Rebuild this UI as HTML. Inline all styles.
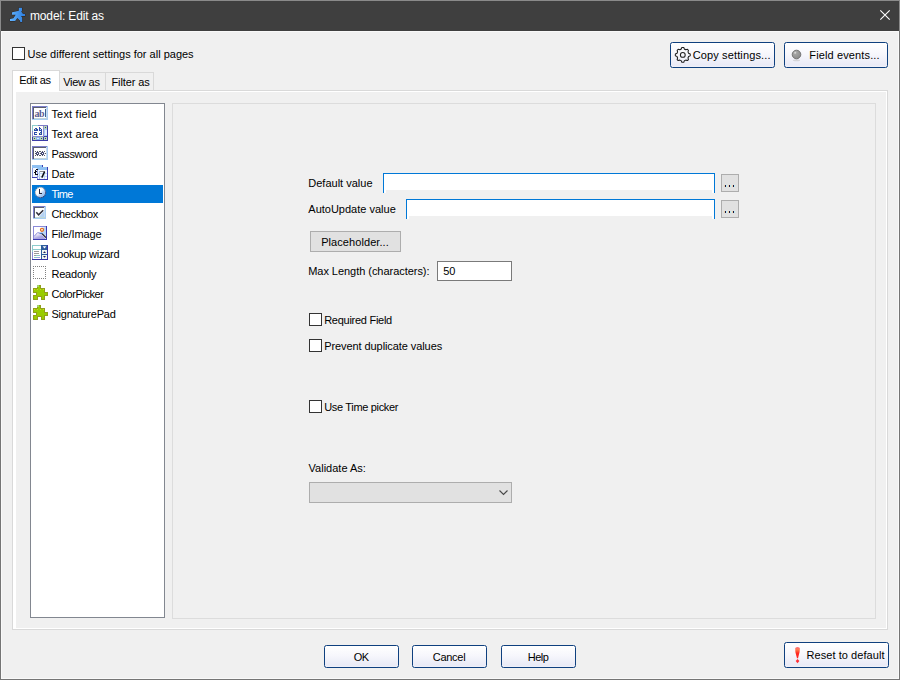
<!DOCTYPE html>
<html>
<head>
<meta charset="utf-8">
<title>model: Edit as</title>
<style>
html,body{margin:0;padding:0;}
body{width:900px;height:680px;overflow:hidden;background:#f0f0f0;font-family:"Liberation Sans",sans-serif;font-size:11px;color:#000;position:relative;}
.a{position:absolute;box-sizing:border-box;}
.t{position:absolute;white-space:nowrap;line-height:13px;font-size:11px;}
.frame{left:0;top:0;width:900px;height:680px;border:1px solid #757575;}
.frame2{left:1px;top:31px;width:898px;height:648px;border:1px solid #f9f9f9;}
.frameT{left:0;top:0;width:900px;height:31px;border:1px solid #8a8a8a;border-bottom:none;}
.title{left:1px;top:1px;width:898px;height:30px;background:#3f3f3f;}
.title .t{color:#fff;font-size:12px;line-height:15px;}
.cb{width:13px;height:13px;border:1px solid #333;background:#fff;}
.bb{border:1px solid #0f407f;border-radius:2.5px;background:linear-gradient(#ffffff,#f7f7fc 45%,#e9eaf6 92%,#f0f1f9);}
.gb{border:1px solid #adadad;background:#e1e1e1;}
.sel{background:#0078d7;}
svg{position:absolute;left:0;top:0;overflow:visible;}
</style>
</head>
<body>
<!-- window frame -->
<div class="a frame"></div>
<div class="a frame2"></div>
<div class="a frameT"></div>
<div class="a title">
<span class="t" style="left:29px;top:8px;letter-spacing:-0.15px;">model: Edit as</span>
</div>

<!-- top row -->
<div class="a cb" style="left:12px;top:47px;"></div>
<span class="t" style="left:27.5px;top:48px;">Use different settings for all pages</span>

<div class="a bb" style="left:670px;top:42px;width:105px;height:26px;"></div>
<span class="t" style="left:692.7px;top:49px;letter-spacing:0.13px;">Copy settings...</span>
<div class="a bb" style="left:784px;top:42px;width:104px;height:26px;"></div>
<span class="t" style="left:809.3px;top:49px;letter-spacing:0.13px;">Field events...</span>

<!-- tab control -->
<div class="a" style="left:12px;top:90px;width:876px;height:540px;border:1px solid #d9d9d9;background:#fff;"></div>
<div class="a" style="left:16px;top:92px;width:870px;height:536px;background:#f0f0f0;"></div>
<div class="a" style="left:59px;top:72px;width:47px;height:18px;border:1px solid #d9d9d9;border-bottom:none;border-left:none;background:#f0f0f0;"></div>
<div class="a" style="left:105px;top:72px;width:49px;height:18px;border:1px solid #d9d9d9;border-bottom:none;background:#f0f0f0;"></div>
<div class="a" style="left:12px;top:70px;width:48px;height:21px;border:1px solid #d9d9d9;border-bottom:none;background:#fff;"></div>
<span class="t" style="left:19.2px;top:74px;letter-spacing:-0.3px;">Edit as</span>
<span class="t" style="left:63.2px;top:76px;letter-spacing:-0.27px;">View as</span>
<span class="t" style="left:111.5px;top:76px;letter-spacing:-0.1px;">Filter as</span>

<!-- listbox -->
<div class="a" style="left:30px;top:103px;width:135px;height:515px;border:1px solid #828790;background:#fff;"></div>
<div class="a sel" style="left:32px;top:185px;width:131px;height:18px;"></div>
<span class="t" style="left:51.4px;top:108px;letter-spacing:0.2px;">Text field</span>
<span class="t" style="left:51.4px;top:128px;letter-spacing:0.18px;">Text area</span>
<span class="t" style="left:51.4px;top:148px;letter-spacing:-0.32px;">Password</span>
<span class="t" style="left:51.4px;top:168px;">Date</span>
<span class="t" style="left:51.4px;top:188px;letter-spacing:-0.65px;color:#fff;">Time</span>
<span class="t" style="left:51.4px;top:208px;letter-spacing:-0.29px;">Checkbox</span>
<span class="t" style="left:51.4px;top:228px;letter-spacing:-0.13px;">File/Image</span>
<span class="t" style="left:51.4px;top:248px;letter-spacing:-0.22px;">Lookup wizard</span>
<span class="t" style="left:51.4px;top:268px;letter-spacing:-0.18px;">Readonly</span>
<span class="t" style="left:51.4px;top:288px;letter-spacing:-0.43px;">ColorPicker</span>
<span class="t" style="left:51.4px;top:308px;letter-spacing:-0.2px;">SignaturePad</span>
<svg width="900" height="680" viewBox="0 0 900 680" shape-rendering="crispEdges">
<rect x="32" y="106" width="16" height="14" fill="#a9cdf2"/><rect x="32" y="106" width="15" height="13" fill="#7d7fcc"/><rect x="33" y="107" width="14" height="12" fill="#5a5f6e"/><rect x="34" y="108" width="13" height="11" fill="#fff"/><rect x="46" y="107" width="1" height="12" fill="#c8dcf0"/><rect x="34" y="118" width="13" height="1" fill="#c0d4d8"/><g fill="#5a5c8a"><rect x="45" y="109" width="1" height="8" fill="#3f5f8f"/></g>
<text x="34.5" y="117" font-family="Liberation Serif" font-size="10" font-weight="bold" fill="#5b5c90" shape-rendering="auto" style="letter-spacing:-0.5px">ab</text>
<rect x="32" y="125" width="16" height="16" fill="#3c3ca8"/><rect x="32" y="125" width="12" height="12" fill="#8e8fd0"/><rect x="32" y="125" width="6" height="6" fill="#8fcfcf"/><rect x="33" y="126" width="10" height="10" fill="#fffffa"/><rect x="44" y="126" width="3" height="3" fill="#b8d8b0"/><rect x="45" y="127" width="1" height="1" fill="#2a3c9a"/><rect x="44" y="129" width="3" height="7" fill="#a8ccf4"/><rect x="45" y="130" width="2" height="5" fill="#e4eefc"/><rect x="33" y="137" width="3" height="3" fill="#b8d8b0"/><rect x="34" y="138" width="1" height="1" fill="#2a3c9a"/><rect x="36" y="137" width="4" height="3" fill="#8ab4ec"/><rect x="37" y="138" width="2" height="1" fill="#e4eefc"/><rect x="40" y="137" width="3" height="3" fill="#b8d8b0"/><rect x="41" y="138" width="1" height="1" fill="#2a3c9a"/><rect x="44" y="137" width="3" height="3" fill="#b8d8b0"/><rect x="45" y="138" width="1" height="1" fill="#2a3c9a"/>
<g fill="#2c4cac"><rect x="35" y="128" width="1" height="1"/><rect x="36" y="128" width="1" height="1"/><rect x="34" y="129" width="1" height="1"/><rect x="36" y="129" width="1" height="1"/><rect x="37" y="129" width="1" height="1"/><rect x="34" y="130" width="1" height="1"/><rect x="35" y="130" width="1" height="1"/><rect x="36" y="130" width="1" height="1"/><rect x="37" y="130" width="1" height="1"/><rect x="39" y="127" width="1" height="1"/><rect x="39" y="128" width="1" height="1"/><rect x="40" y="128" width="1" height="1"/><rect x="39" y="129" width="1" height="1"/><rect x="41" y="129" width="1" height="1"/><rect x="39" y="130" width="1" height="1"/><rect x="40" y="130" width="1" height="1"/><rect x="41" y="130" width="1" height="1"/><rect x="34" y="132" width="1" height="1"/><rect x="35" y="132" width="1" height="1"/><rect x="36" y="132" width="1" height="1"/><rect x="34" y="133" width="1" height="1"/><rect x="34" y="134" width="1" height="1"/><rect x="35" y="134" width="1" height="1"/><rect x="36" y="134" width="1" height="1"/><rect x="41" y="131" width="1" height="1"/><rect x="40" y="132" width="1" height="1"/><rect x="41" y="132" width="1" height="1"/><rect x="39" y="133" width="1" height="1"/><rect x="41" y="133" width="1" height="1"/><rect x="39" y="134" width="1" height="1"/><rect x="40" y="134" width="1" height="1"/><rect x="41" y="134" width="1" height="1"/></g><rect x="35" y="129" width="1" height="1" fill="#c8d890"/><rect x="40" y="129" width="1" height="1" fill="#d8e8f8"/><rect x="40" y="133" width="1" height="1" fill="#b8d8a0"/><rect x="38" y="125" width="10" height="1" fill="#7c7cc8"/>
<rect x="32" y="146" width="16" height="14" fill="#a9cdf2"/><rect x="32" y="146" width="15" height="13" fill="#7d7fcc"/><rect x="33" y="147" width="14" height="12" fill="#5a5f6e"/><rect x="34" y="148" width="13" height="11" fill="#fff"/><rect x="46" y="147" width="1" height="12" fill="#c8dcf0"/><rect x="34" y="158" width="13" height="1" fill="#c0d4d8"/><g fill="#3a3d6a" shape-rendering="auto"><circle cx="37.5" cy="153.5" r="1.7"/><circle cx="42.5" cy="153.5" r="1.7"/></g><g fill="#fff"><rect x="37" y="153" width="1" height="1"/><rect x="42" y="153" width="1" height="1"/></g><rect x="35" y="151" width="1" height="1" fill="#555a66"/><rect x="37" y="151" width="1" height="1" fill="#555a66"/><rect x="39" y="151" width="1" height="1" fill="#555a66"/><rect x="40" y="151" width="1" height="1" fill="#555a66"/><rect x="42" y="151" width="1" height="1" fill="#555a66"/><rect x="44" y="151" width="1" height="1" fill="#555a66"/><rect x="35" y="155" width="1" height="1" fill="#555a66"/><rect x="37" y="155" width="1" height="1" fill="#555a66"/><rect x="39" y="155" width="1" height="1" fill="#555a66"/><rect x="40" y="155" width="1" height="1" fill="#555a66"/><rect x="42" y="155" width="1" height="1" fill="#555a66"/><rect x="44" y="155" width="1" height="1" fill="#555a66"/><rect x="35" y="153" width="1" height="1" fill="#555a66"/><rect x="40" y="153" width="1" height="1" fill="#555a66"/><rect x="45" y="153" width="1" height="1" fill="#555a66"/>
<rect x="32" y="165" width="11" height="13" fill="#3c3cb0"/><rect x="32" y="165" width="10" height="12" fill="#8c9ce0"/><rect x="32" y="165" width="10" height="3" fill="#8ec0f2"/><rect x="33" y="168" width="9" height="9" fill="#f4f8ff"/><rect x="37" y="167" width="11" height="13" fill="#3c3cb0"/><rect x="37" y="167" width="10" height="12" fill="#8c9ce0"/><rect x="37" y="167" width="10" height="3" fill="#8ec0f2"/><rect x="38" y="170" width="9" height="9" fill="#f4f8ff"/><rect x="39" y="171" width="1" height="8" fill="#a8c4ec"/><rect x="38" y="173" width="9" height="1" fill="#c4d8f4"/><rect x="38" y="176" width="9" height="1" fill="#c4d8f4"/><rect x="44" y="171" width="1" height="8" fill="#c4d8f4"/><g fill="#0c0c14"><rect x="36" y="169" width="1" height="1"/><rect x="37" y="169" width="1" height="1"/><rect x="35" y="170" width="1" height="1"/><rect x="35" y="171" width="1" height="1"/><rect x="36" y="171" width="1" height="1"/><rect x="34" y="172" width="1" height="1"/><rect x="35" y="172" width="1" height="1"/><rect x="35" y="173" width="1" height="1"/><rect x="35" y="174" width="1" height="1"/><rect x="36" y="174" width="1" height="1"/><rect x="37" y="174" width="1" height="1"/></g><rect x="40" y="171" width="5" height="1" fill="#8c8c90"/><path d="M44.6,171.6 L41.8,177.6" stroke="#0c0c14" stroke-width="1.5" fill="none" shape-rendering="auto"/>
<g shape-rendering="auto"><defs><linearGradient id="ck" x1="0" y1="0" x2="1" y2="1"><stop offset="0.42" stop-color="#ffffff"/><stop offset="0.68" stop-color="#a4c8f2"/></linearGradient><linearGradient id="ckb" x1="0" y1="0" x2="1" y2="1"><stop offset="0.2" stop-color="#d8d0c4"/><stop offset="0.6" stop-color="#7c78a0"/><stop offset="1" stop-color="#1c1c50"/></linearGradient></defs><circle cx="40.5" cy="192.5" r="5.1" fill="url(#ck)" stroke="url(#ckb)" stroke-width="1.1" stroke-dasharray="1.3 0.7"/></g><rect x="39" y="189" width="1" height="5" fill="#26263c"/><rect x="39" y="193" width="3" height="1" fill="#26263c"/>
<rect x="33" y="206" width="13" height="13" fill="#a9cdf2"/><rect x="33" y="206" width="12" height="12" fill="#7d7fcc"/><rect x="34" y="207" width="11" height="11" fill="#5a5f6e"/><rect x="35" y="208" width="10" height="10" fill="#fff"/><path d="M45,210 V218 H38 Z" fill="#b4d2f4" shape-rendering="auto"/><rect x="44" y="207" width="1" height="11" fill="#c8dcf0"/><rect x="35" y="217" width="10" height="1" fill="#c0d8d4"/><path d="M36.3,212.3 L38.6,214.8 L43.2,210.2" stroke="#30303c" stroke-width="1.5" fill="none" shape-rendering="auto"/>
<rect x="33" y="226" width="14" height="14" fill="#3a3ab0"/><rect x="33" y="226" width="13" height="13" fill="#8a8ad8"/><rect x="34" y="227" width="12" height="12" fill="#fff"/><g shape-rendering="auto"><defs><linearGradient id="mt" x1="0" y1="0" x2="0.6" y2="1"><stop offset="0.25" stop-color="#ffffff"/><stop offset="0.75" stop-color="#aaa6e2"/></linearGradient></defs><path d="M34,236 L38,232 L41,234 L46,239 H34 Z" fill="url(#mt)"/><path d="M41,228 L46,227 V236 L41,233 Z" fill="#b8d4f6"/><path d="M34,236.5 L37.6,232.6 L39.3,233" stroke="#8a8ad8" stroke-width="1" fill="none"/><path d="M39.3,233 L42,233.6" stroke="#3a70c0" stroke-width="1.2" fill="none"/><path d="M42,233.6 L46,237.6" stroke="#151520" stroke-width="1.3" fill="none"/><circle cx="42" cy="229.8" r="1.6" fill="#f8e8c0" stroke="#e86818" stroke-width="1.1"/></g>
<rect x="32" y="245" width="16" height="15" fill="#3434a4"/><rect x="32" y="245" width="9" height="7" fill="#8ccccc"/><rect x="32" y="252" width="1" height="7" fill="#8c8cd4"/><rect x="33" y="246" width="8" height="3" fill="#fff"/><rect x="33" y="250" width="8" height="9" fill="#fff"/><rect x="41" y="245" width="6" height="5" fill="#2c5c9c"/><rect x="41" y="250" width="1" height="9" fill="#2c5c9c"/><rect x="42" y="250" width="5" height="4" fill="#f0f8f0"/><rect x="42" y="255" width="5" height="4" fill="#f0f8f0"/><rect x="42" y="254" width="5" height="1" fill="#2c5c9c"/><g shape-rendering="auto"><path d="M42.6,246.3 H46.4 L44.5,248.6 Z" fill="#fff"/><path d="M43,253 L44.5,251.3 L46,253 Z" fill="#202060"/><path d="M43,256 L44.5,257.8 L46,256 Z" fill="#202060"/></g><rect x="34" y="251" width="5" height="1" fill="#9a9a9a"/><rect x="34" y="253" width="5" height="1" fill="#9a9a9a"/><rect x="34" y="255" width="2" height="1" fill="#9a9a9a"/><rect x="36" y="255" width="4" height="1" fill="#88c8c8"/><rect x="34" y="257" width="3" height="1" fill="#88c8c8"/><rect x="37" y="257" width="3" height="1" fill="#a0a0e0"/>
<rect x="33" y="266" width="1" height="1" fill="#808080"/><rect x="33" y="278" width="1" height="1" fill="#808080"/><rect x="35" y="266" width="1" height="1" fill="#808080"/><rect x="35" y="278" width="1" height="1" fill="#808080"/><rect x="37" y="266" width="1" height="1" fill="#808080"/><rect x="37" y="278" width="1" height="1" fill="#808080"/><rect x="39" y="266" width="1" height="1" fill="#808080"/><rect x="39" y="278" width="1" height="1" fill="#808080"/><rect x="41" y="266" width="1" height="1" fill="#808080"/><rect x="41" y="278" width="1" height="1" fill="#808080"/><rect x="43" y="266" width="1" height="1" fill="#808080"/><rect x="43" y="278" width="1" height="1" fill="#808080"/><rect x="45" y="266" width="1" height="1" fill="#808080"/><rect x="45" y="278" width="1" height="1" fill="#808080"/><rect x="33" y="268" width="1" height="1" fill="#808080"/><rect x="45" y="268" width="1" height="1" fill="#808080"/><rect x="33" y="270" width="1" height="1" fill="#808080"/><rect x="45" y="270" width="1" height="1" fill="#808080"/><rect x="33" y="272" width="1" height="1" fill="#808080"/><rect x="45" y="272" width="1" height="1" fill="#808080"/><rect x="33" y="274" width="1" height="1" fill="#808080"/><rect x="45" y="274" width="1" height="1" fill="#808080"/><rect x="33" y="276" width="1" height="1" fill="#808080"/><rect x="45" y="276" width="1" height="1" fill="#808080"/>
<path d="M37.5,285.5 H40.5 V288.5 H44.5 V292.5 H47.5 V295.5 H44.5 V299.5 H41.5 V296.5 H37.5 V299.5 H33.5 V295.5 H36.5 V292.5 H33.5 V288.5 H37.5 Z" fill="#99cc00" stroke="#919f1c" stroke-width="1"/><rect x="34" y="289" width="1" height="1" fill="#c9d72a"/><rect x="37" y="289" width="1" height="1" fill="#c9d72a"/><rect x="40" y="289" width="1" height="1" fill="#c9d72a"/><rect x="43" y="289" width="1" height="1" fill="#c9d72a"/><rect x="37" y="285" width="2" height="2" fill="#a6d86a"/>
<path d="M37.5,305.5 H40.5 V308.5 H44.5 V312.5 H47.5 V315.5 H44.5 V319.5 H41.5 V316.5 H37.5 V319.5 H33.5 V315.5 H36.5 V312.5 H33.5 V308.5 H37.5 Z" fill="#99cc00" stroke="#919f1c" stroke-width="1"/><rect x="34" y="309" width="1" height="1" fill="#c9d72a"/><rect x="37" y="309" width="1" height="1" fill="#c9d72a"/><rect x="40" y="309" width="1" height="1" fill="#c9d72a"/><rect x="43" y="309" width="1" height="1" fill="#c9d72a"/><rect x="37" y="305" width="2" height="2" fill="#a6d86a"/>
</svg>

<!-- group panel -->
<div class="a" style="left:172px;top:103px;width:704px;height:516px;border:1px solid #dcdcdc;"></div>
<span class="t" style="left:308.3px;top:177px;">Default value</span>
<div class="a" style="left:383px;top:173px;width:332px;height:20px;border:1px solid #0078d7;border-bottom:none;background:#fff;"></div>
<div class="a" style="left:386px;top:190px;width:326px;height:3px;background:#f0f0f0;"></div>
<div class="a gb" style="left:721px;top:174px;width:18px;height:18px;"></div>
<span class="t" style="left:308.3px;top:203px;">AutoUpdate value</span>
<div class="a" style="left:406px;top:199px;width:309px;height:20px;border:1px solid #0078d7;border-bottom:none;background:#fff;"></div>
<div class="a" style="left:409px;top:216px;width:303px;height:3px;background:#f0f0f0;"></div>
<div class="a gb" style="left:721px;top:200px;width:18px;height:18px;"></div>
<div class="a gb" style="left:310px;top:231px;width:91px;height:21px;"></div>
<span class="t" style="left:321.2px;top:236px;letter-spacing:0.07px;">Placeholder...</span>
<span class="t" style="left:308.2px;top:265px;letter-spacing:-0.04px;">Max Length (characters):</span>
<div class="a" style="left:437px;top:261px;width:75px;height:20px;border:1px solid #7a7a7a;background:#fff;"></div>
<span class="t" style="left:443.2px;top:265px;">50</span>
<div class="a cb" style="left:309px;top:313px;"></div>
<span class="t" style="left:324.2px;top:314px;letter-spacing:-0.27px;">Required Field</span>
<div class="a cb" style="left:309px;top:339px;"></div>
<span class="t" style="left:324.2px;top:340px;letter-spacing:-0.08px;">Prevent duplicate values</span>
<div class="a cb" style="left:309px;top:400px;"></div>
<span class="t" style="left:324.2px;top:401px;letter-spacing:-0.33px;">Use Time picker</span>
<span class="t" style="left:308.6px;top:462px;">Validate As:</span>
<div class="a gb" style="left:309px;top:482px;width:203px;height:21px;"></div>

<!-- bottom buttons -->
<div class="a bb" style="left:324px;top:645px;width:75px;height:23px;"></div>
<span class="t" style="left:353.7px;top:651px;letter-spacing:-0.5px;">OK</span>
<div class="a bb" style="left:412px;top:645px;width:75px;height:23px;"></div>
<span class="t" style="left:432.7px;top:651px;letter-spacing:-0.25px;">Cancel</span>
<div class="a bb" style="left:501px;top:645px;width:75px;height:23px;"></div>
<span class="t" style="left:527.7px;top:651px;letter-spacing:-0.5px;">Help</span>
<div class="a bb" style="left:784px;top:642px;width:105px;height:26px;"></div>
<span class="t" style="left:806.5px;top:649px;letter-spacing:0.06px;">Reset to default</span>
<svg width="900" height="680" viewBox="0 0 900 680">
<defs>
<linearGradient id="rn" x1="0" y1="0" x2="1" y2="0"><stop offset="0" stop-color="#62b4ff"/><stop offset="1" stop-color="#2c7cdc"/></linearGradient>
<radialGradient id="ball" cx="0.35" cy="0.3" r="0.7"><stop offset="0" stop-color="#e8e8e8"/><stop offset="0.25" stop-color="#a4a4a4"/><stop offset="1" stop-color="#8c8c8c"/></radialGradient>
<linearGradient id="ex" x1="0" y1="0" x2="0" y2="1"><stop offset="0" stop-color="#ff6a78"/><stop offset="0.25" stop-color="#ff7a50"/><stop offset="0.55" stop-color="#ff2a22"/><stop offset="1" stop-color="#ff2428"/></linearGradient>
</defs>
<!-- runner -->
<path d="M18.8,7.7 H22 V10.8 L21.2,11.6 L22.8,13.7 L25.1,14 V16.1 H21 L22.2,17.6 V22 H20.2 V20.8 L17.3,17.9 L15.2,21 H9.9 V18.9 L13.4,18.2 L15.7,14.7 H11.8 L12.1,12.3 L18.8,10.8 Z" fill="url(#rn)" stroke="rgba(30,15,5,0.55)" stroke-width="1" paint-order="stroke"/>
<!-- close X -->
<path d="M880.3,10.3 L889.7,19.7 M889.7,10.3 L880.3,19.7" stroke="#fff" stroke-width="1.1" fill="none"/>
<!-- gear -->
<g transform="translate(682.8,54.9)" fill="none" stroke="#1e1e1e" stroke-width="1.05" stroke-linejoin="round"><path d="M-0.97,-7.44 L0.97,-7.44 L1.60,-5.78 A6.00,6.00 0 0 1 2.96,-5.22 L4.62,-5.65 L5.65,-4.62 L5.22,-2.96 A6.00,6.00 0 0 1 5.78,-1.60 L7.44,-0.97 L7.44,0.97 L5.78,1.60 A6.00,6.00 0 0 1 5.22,2.96 L5.65,4.62 L4.62,5.65 L2.96,5.22 A6.00,6.00 0 0 1 1.60,5.78 L0.97,7.44 L-0.97,7.44 L-1.60,5.78 A6.00,6.00 0 0 1 -2.96,5.22 L-4.62,5.65 L-5.65,4.62 L-5.22,2.96 A6.00,6.00 0 0 1 -5.78,1.60 L-7.44,0.97 L-7.44,-0.97 L-5.78,-1.60 A6.00,6.00 0 0 1 -5.22,-2.96 L-5.65,-4.62 L-4.62,-5.65 L-2.96,-5.22 A6.00,6.00 0 0 1 -1.60,-5.78 Z"/><circle cx="0" cy="0" r="2.4"/></g>
<!-- ball -->
<ellipse cx="796.5" cy="60.4" rx="3.6" ry="0.8" fill="#d4d4d8"/>
<circle cx="796.5" cy="54.5" r="4.3" fill="url(#ball)" stroke="#6c6c6c" stroke-width="0.9"/>
<!-- exclamation -->
<path d="M795.2,648.5 Q795.2,647 797.5,647 Q799.9,647 799.9,648.5 L799.6,652 Q798.6,656 798,658.3 H797 Q796.4,656 795.4,652 Z" fill="url(#ex)"/>
<path d="M797.5,659 L799.4,661 L797.5,663.2 L795.7,661 Z" fill="#ff3038"/>
<!-- combo chevron -->
<path d="M499.5,490.5 L503.5,494.5 L507.5,490.5" stroke="#484848" stroke-width="1.1" fill="none"/>
<!-- ellipsis dots -->
<g shape-rendering="crispEdges">
<g fill="#ecd2a4"><rect x="724" y="185" width="1" height="2"/><rect x="728" y="185" width="1" height="2"/><rect x="732" y="185" width="1" height="2"/><rect x="724" y="211" width="1" height="2"/><rect x="728" y="211" width="1" height="2"/><rect x="732" y="211" width="1" height="2"/></g>
<g fill="#b4ecf4"><rect x="726" y="185" width="1" height="2"/><rect x="730" y="185" width="1" height="2"/><rect x="734" y="185" width="1" height="2"/><rect x="726" y="211" width="1" height="2"/><rect x="730" y="211" width="1" height="2"/><rect x="734" y="211" width="1" height="2"/></g>
</g>
<g fill="#1a1240" shape-rendering="crispEdges">
<rect x="725" y="185" width="1" height="2"/><rect x="729" y="185" width="1" height="2"/><rect x="733" y="185" width="1" height="2"/>
<rect x="725" y="211" width="1" height="2"/><rect x="729" y="211" width="1" height="2"/><rect x="733" y="211" width="1" height="2"/>
</g>
</svg>
</body>
</html>
